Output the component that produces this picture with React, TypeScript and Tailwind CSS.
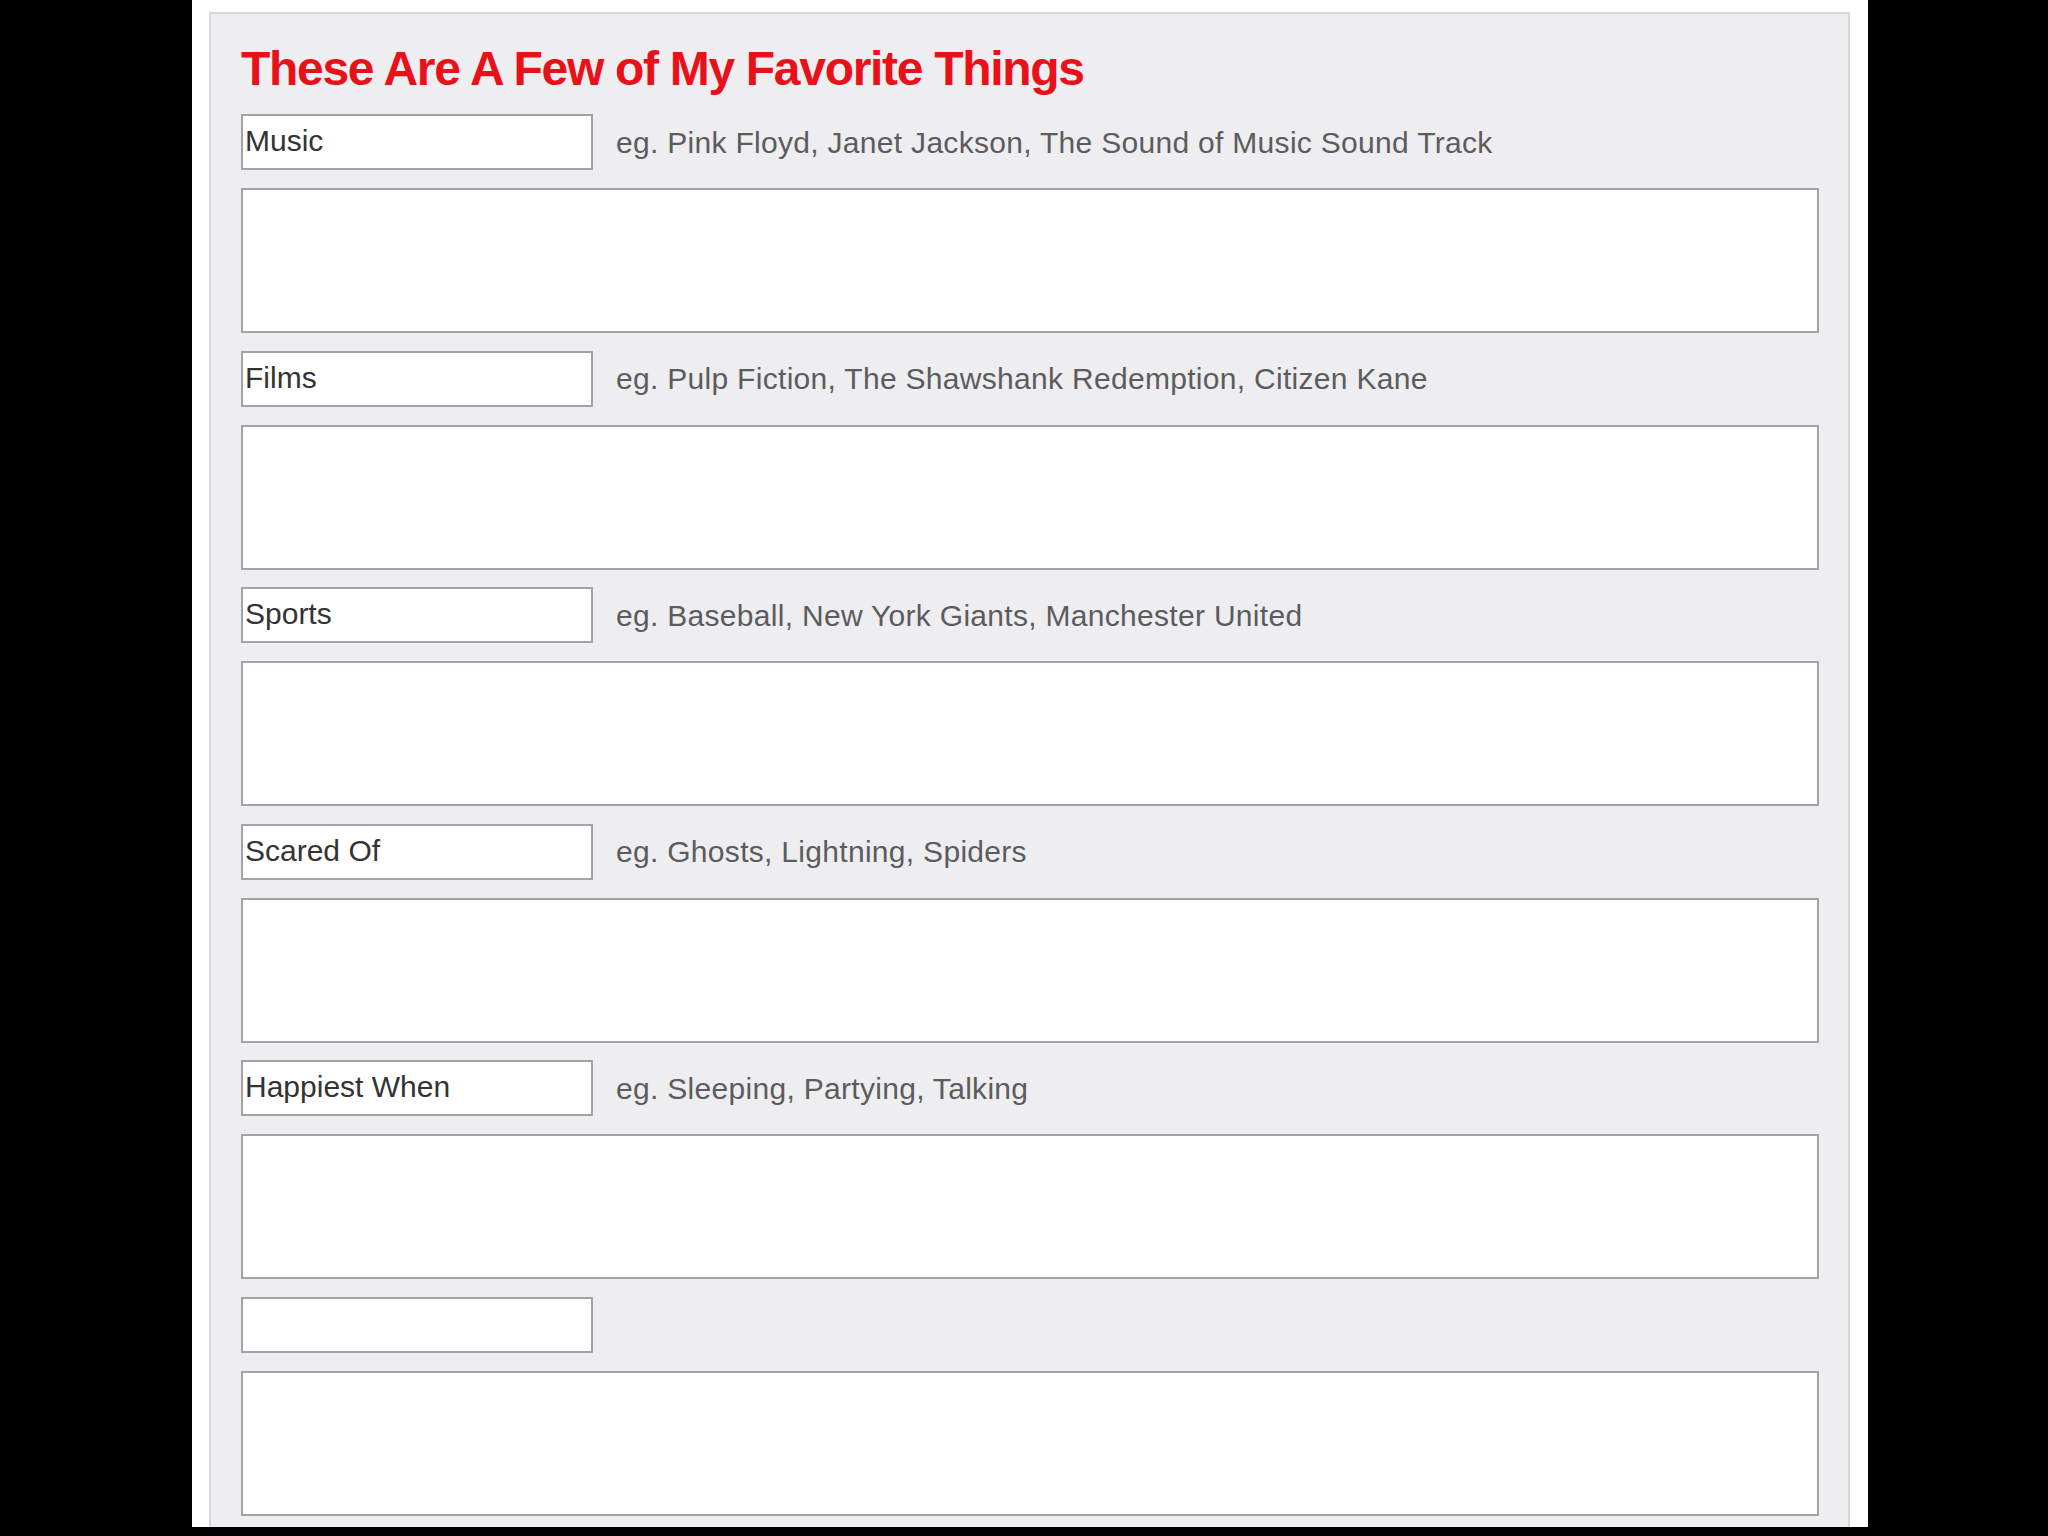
import React from "react";

const rows = [
  { label: "Music", hint: "eg. Pink Floyd, Janet Jackson, The Sound of Music Sound Track" },
  { label: "Films", hint: "eg. Pulp Fiction, The Shawshank Redemption, Citizen Kane" },
  { label: "Sports", hint: "eg. Baseball, New York Giants, Manchester United" },
  { label: "Scared Of", hint: "eg. Ghosts, Lightning, Spiders" },
  { label: "Happiest When", hint: "eg. Sleeping, Partying, Talking" },
  { label: "", hint: "" },
];

export default function App() {
  return (
    <div className="w-[2048px] h-[1536px] bg-black overflow-hidden" style={{ fontFamily: '"Liberation Sans", Arial, sans-serif' }}>
      <div className="ml-[192px] w-[1676px] h-[1527px] bg-white pt-[12px] pl-[17px] pr-[18px] overflow-hidden">
        <div className="h-[1600px] bg-[#eeedef] border-2 border-b-0 border-[#d6d6d8] pt-[31px] pl-[30px] pr-[29px]">
          <h1 className="text-[48px] leading-none font-bold text-[#e8111a] tracking-[-1.3px]">
            These Are A Few of My Favorite Things
          </h1>
          <div className="mt-[21px] flex flex-col gap-[17.6px]">
            {rows.map((r, i) => (
              <div key={i} className="flex flex-col">
                <div className="flex items-center h-[56px]">
                  <input
                    readOnly
                    defaultValue={r.label}
                    className="w-[352px] h-[56px] bg-white border-2 border-[#a3a3a5] pl-[2px] pb-[2px] text-[30px] text-[#333333] outline-none"
                    style={{ fontFamily: '"Liberation Sans", Arial, sans-serif' }}
                  />
                  {r.hint && (
                    <span className="ml-[23px] text-[30px] text-[#5c5c5e] whitespace-nowrap tracking-[0.3px]">{r.hint}</span>
                  )}
                </div>
                <textarea
                  readOnly
                  className="mt-[18px] block w-full h-[145px] bg-white border-2 border-[#a3a3a5] resize-none outline-none"
                />
              </div>
            ))}
          </div>
        </div>
      </div>
    </div>
  );
}
